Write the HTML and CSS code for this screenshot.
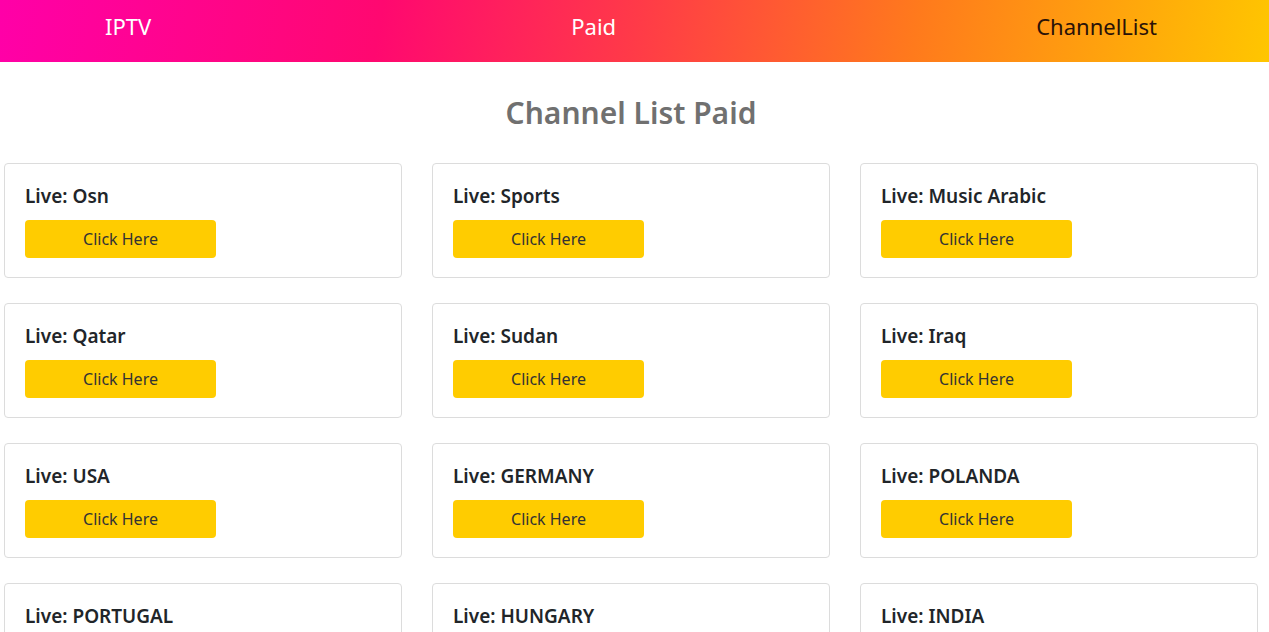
FILE: index.html
```html
<!DOCTYPE html>
<html lang="en">
<head>
<meta charset="utf-8">
<title>Channel List Paid</title>
<link rel="stylesheet" href="styles.css">
</head>
<body>
<header class="topbar">
  <a class="nav-link nav-light" href="#">IPTV</a>
  <a class="nav-link nav-light" href="#">Paid</a>
  <a class="nav-link nav-dark" href="#">ChannelList</a>
</header>
<main class="content">
  <h2 class="page-title">Channel List Paid</h2>
  <div class="grid">
    <div class="card"><h5 class="card-title">Live: Osn</h5><a class="btn" href="#">Click Here</a></div>
    <div class="card"><h5 class="card-title">Live: Sports</h5><a class="btn" href="#">Click Here</a></div>
    <div class="card"><h5 class="card-title">Live: Music Arabic</h5><a class="btn" href="#">Click Here</a></div>
    <div class="card"><h5 class="card-title">Live: Qatar</h5><a class="btn" href="#">Click Here</a></div>
    <div class="card"><h5 class="card-title">Live: Sudan</h5><a class="btn" href="#">Click Here</a></div>
    <div class="card"><h5 class="card-title">Live: Iraq</h5><a class="btn" href="#">Click Here</a></div>
    <div class="card"><h5 class="card-title">Live: USA</h5><a class="btn" href="#">Click Here</a></div>
    <div class="card"><h5 class="card-title">Live: GERMANY</h5><a class="btn" href="#">Click Here</a></div>
    <div class="card"><h5 class="card-title">Live: POLANDA</h5><a class="btn" href="#">Click Here</a></div>
    <div class="card"><h5 class="card-title">Live: PORTUGAL</h5><a class="btn" href="#">Click Here</a></div>
    <div class="card"><h5 class="card-title">Live: HUNGARY</h5><a class="btn" href="#">Click Here</a></div>
    <div class="card"><h5 class="card-title">Live: INDIA</h5><a class="btn" href="#">Click Here</a></div>
  </div>
</main>
</body>
</html>
```
FILE: styles.css
```css
* { box-sizing: border-box; }
html, body { margin: 0; padding: 0; }
body {
  font-family: "Noto Sans", "Open Sans", sans-serif;
  color: #212529;
  background: #fff;
}
.topbar {
  height: 62px;
  display: flex;
  align-items: center;
  justify-content: space-between;
  padding: 0 112px 10px 105px;
  background: linear-gradient(100deg, #ff00a8 0%, #ff0870 30%, #ff3a48 50%, #ff7a1c 72%, #ffc600 100%);
}
.nav-link {
  font-size: 22px;
  text-decoration: none;
  line-height: 1;
}
.nav-light { color: #fff; }
.nav-dark { color: #2a1208; }
.content { padding: 0 11px 0 4px; }
.page-title {
  margin: 31px 0 30px;
  text-align: center;
  font-size: 30px;
  font-weight: 600;
  color: #707070;
  line-height: 40px;
}
.grid {
  display: grid;
  grid-template-columns: repeat(3, 398px);
  column-gap: 30px;
  row-gap: 25px;
}
.card {
  border: 1px solid #dcdcdc;
  border-radius: 4px;
  padding: 20px;
  height: 115px;
}
.card-title {
  margin: 0 0 12px;
  font-size: 19px;
  font-weight: 600;
  line-height: 24px;
}
.btn {
  display: flex;
  align-items: center;
  justify-content: center;
  width: 191px;
  height: 38px;
  background: #ffcc00;
  border-radius: 4px;
  color: #333;
  font-size: 16px;
  text-decoration: none;
}
```
